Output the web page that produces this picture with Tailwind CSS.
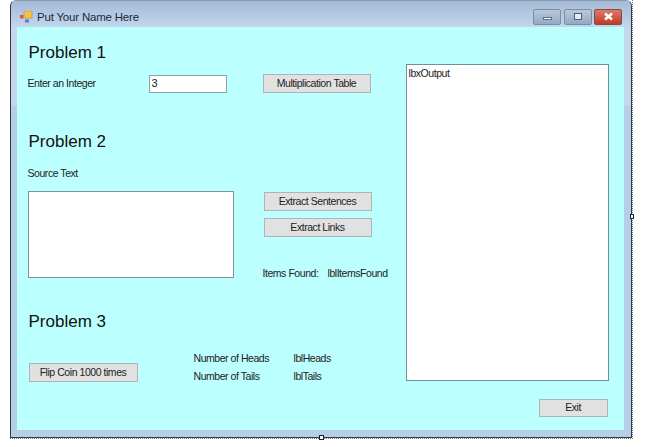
<!DOCTYPE html>
<html lang="en">
<head>
  <meta charset="UTF-8">
  <title>Put Your Name Here</title>
  <script src="https://cdn.jsdelivr.net/npm/@tailwindcss/browser@4"></script>
</head>
<body class="bg-white overflow-hidden font-['Liberation_Sans',sans-serif] text-[#222] text-[10.5px] leading-[14px] tracking-[-0.45px]">

  <div class="relative w-[655px] h-[447px]">
    <!-- Designer selection outline -->
    <div class="ml-[10px] w-[623px] h-[439px] border-r border-b border-dotted border-[#777]">
      <!-- Window -->
      <div class="w-[622px] h-[438px] flex flex-col border-[1.5px] border-[#2b3a44] border-t-[#8a9aa8] rounded-t-[6px] bg-linear-to-b from-[#c4d8ec] from-[24%] to-[#b5cfe8] to-[24%]">
        <!-- Title bar -->
        <div class="h-[26px] shrink-0 flex items-center rounded-t-[5px] bg-linear-to-b from-[#a4bbd8] to-[#c2d6ec] pt-[5px] pl-[9px] pr-[9px]">
          <svg width="13" height="12" viewBox="0 0 13 12" class="shrink-0">
            <rect x="0" y="4" width="3.5" height="3.5" fill="#d8553f"/>
            <rect x="4" y="0" width="8" height="7" fill="#f2c24e" stroke="#b98a2a" stroke-width="0.6"/>
            <rect x="5" y="8.5" width="4" height="3" fill="#5a7fd0"/>
          </svg>
          <span class="ml-[4px] text-[11.5px] tracking-[-0.2px] text-[#1c2a3a]">Put Your Name Here</span>
          <div class="ml-auto flex gap-[2.5px] items-center">
            <div class="w-[28px] h-[16px] rounded-[2px] border border-[#7b8ea6] bg-linear-to-b from-[#b9c9dc] to-[#94a9c3] flex items-center justify-center">
              <div class="w-[9px] h-[3px] bg-white border border-[#5d6f85] mt-[3px]"></div>
            </div>
            <div class="w-[28px] h-[16px] rounded-[2px] border border-[#7b8ea6] bg-linear-to-b from-[#b9c9dc] to-[#94a9c3] flex items-center justify-center">
              <div class="w-[8px] h-[7px] bg-white/70 border-[1.5px] border-[#4d5f75]"></div>
            </div>
            <div class="w-[28px] h-[16px] rounded-[2px] border border-[#8a4a42] bg-linear-to-b from-[#e0786a] to-[#bd3a28] flex items-center justify-center">
              <svg width="11" height="9" viewBox="0 0 11 9"><path d="M2 1.5 L9 7.5 M9 1.5 L2 7.5" stroke="#fff" stroke-width="2.6"/></svg>
            </div>
          </div>
        </div>

        <!-- Client area -->
        <div class="ml-[5.5px] w-[607px] h-[403px] bg-[#bcffff] flex">
          <!-- Left column -->
          <div class="w-[389px] pl-[11px]">
            <!-- Problem 1 -->
            <h2 class="mt-[14px] h-[24px] pl-px text-[17px] tracking-normal leading-[24px] text-[#111]">Problem 1</h2>
            <div class="mt-[9px] h-[19px] flex items-center">
              <span class="w-[121px] pb-px">Enter an Integer</span>
              <input value="3" class="w-[78px] h-[18px] bg-white border border-[#8fa3a8] px-[2px] pb-px text-[11px] text-[#222] outline-none">
              <button class="ml-[36px] w-[108px] h-[19px] pb-[2px] bg-[#e1e1e1] border border-[#adb5b5]">Multiplication Table</button>
            </div>

            <!-- Problem 2 -->
            <h2 class="mt-[37px] h-[24px] pl-px text-[17px] tracking-normal leading-[24px] text-[#111]">Problem 2</h2>
            <p class="mt-[12px]">Source Text</p>
            <div class="mt-[11px] flex">
              <textarea class="w-[206px] h-[87px] bg-white border border-[#7d9299] resize-none outline-none"></textarea>
              <div class="ml-[30px] w-[125px] flex flex-col">
                <button class="mt-px w-[108px] h-[19px] pb-[2px] bg-[#e1e1e1] border border-[#adb5b5]">Extract Sentences</button>
                <button class="mt-[7px] w-[108px] h-[19px] pb-[2px] bg-[#e1e1e1] border border-[#adb5b5]">Extract Links</button>
                <div class="-ml-px mt-[29px] flex">
                  <span class="w-[65px]">Items Found:</span>
                  <span>lblItemsFound</span>
                </div>
              </div>
            </div>

            <!-- Problem 3 -->
            <h2 class="mt-[30px] h-[24px] pl-px text-[17px] tracking-normal leading-[24px] text-[#111]">Problem 3</h2>
            <div class="mt-[18px] flex">
              <button class="ml-px mt-[11px] w-[109px] h-[19px] pb-[2px] bg-[#e1e1e1] border border-[#adb5b5]">Flip Coin 1000 times</button>
              <div class="ml-[56px] flex flex-col gap-[4px] mt-[-1px]">
                <div class="flex"><span class="w-[100px]">Number of Heads</span><span>lblHeads</span></div>
                <div class="flex"><span class="w-[100px]">Number of Tails</span><span>lblTails</span></div>
              </div>
            </div>
          </div>

          <!-- Right column -->
          <div class="w-[203px] pt-[37px] flex flex-col">
            <div class="w-[203px] h-[317px] bg-white border border-[#6f8f9c] px-[2px] py-px">lbxOutput</div>
            <button class="mt-[18px] mr-px self-end w-[69px] h-[18px] pb-[2px] bg-[#e1e1e1] border border-[#adb5b5]">Exit</button>
          </div>
        </div>
      </div>
    </div>

    <!-- Designer selection handles -->
    <div class="absolute left-[630px] top-[214px] w-[4px] h-[5px] bg-white border border-[#222]"></div>
    <div class="absolute left-[319px] top-[435px] w-[5px] h-[5px] bg-white border border-[#222]"></div>
  </div>

</body>
</html>
